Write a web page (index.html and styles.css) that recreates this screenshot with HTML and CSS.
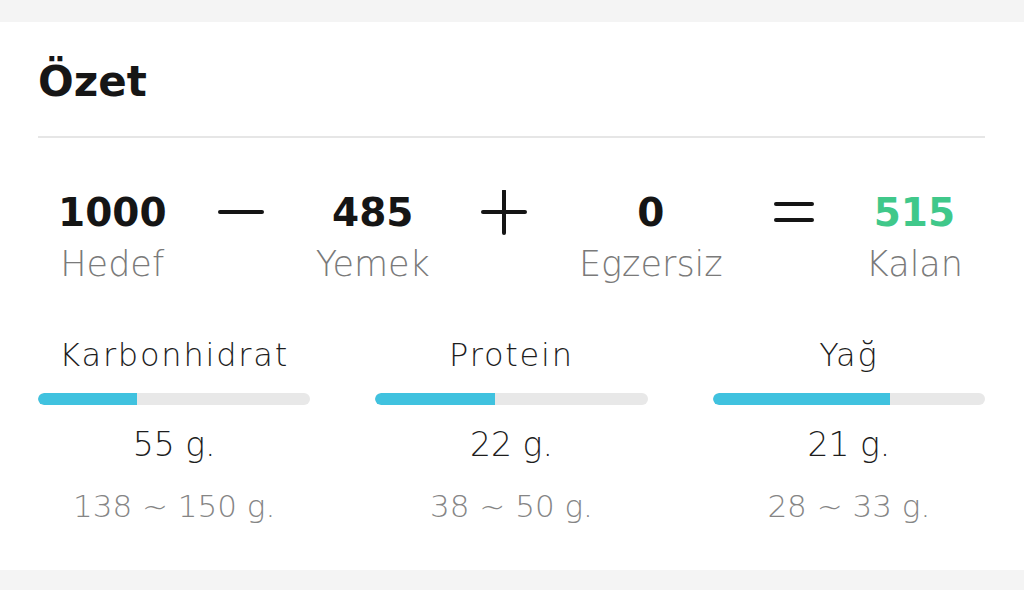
FILE: index.html
```html
<!DOCTYPE html>
<html lang="tr">
<head>
<meta charset="utf-8">
<link rel="stylesheet" href="styles.css">
</head>
<body>
<div class="page">
  <section class="card">
    <h1 class="title">Özet</h1>
    <div class="divider"></div>
    <div class="equation">
      <div class="term">
        <div class="num">1000</div>
        <div class="lbl">Hedef</div>
      </div>
      <div class="op">
        <svg width="46" height="46" viewBox="0 0 46 46"><line x1="2" y1="22" x2="44" y2="22" stroke="#151515" stroke-width="4" stroke-linecap="round"/></svg>
      </div>
      <div class="term">
        <div class="num">485</div>
        <div class="lbl">Yemek</div>
      </div>
      <div class="op">
        <svg width="46" height="46" viewBox="0 0 46 46"><line x1="2" y1="22" x2="44" y2="22" stroke="#151515" stroke-width="4" stroke-linecap="round"/><line x1="23" y1="1" x2="23" y2="43" stroke="#151515" stroke-width="4" stroke-linecap="round"/></svg>
      </div>
      <div class="term">
        <div class="num">0</div>
        <div class="lbl">Egzersiz</div>
      </div>
      <div class="op">
        <svg width="40" height="46" viewBox="0 0 40 46"><line x1="2" y1="14" x2="38" y2="14" stroke="#151515" stroke-width="4" stroke-linecap="round"/><line x1="2" y1="30" x2="38" y2="30" stroke="#151515" stroke-width="4" stroke-linecap="round"/></svg>
      </div>
      <div class="term">
        <div class="num green">515</div>
        <div class="lbl">Kalan</div>
      </div>
    </div>
    <div class="macros">
      <div class="macro">
        <div class="m-name">Karbonhidrat</div>
        <div class="bar"><div class="fill" style="width:36.5%"></div></div>
        <div class="m-val">55 g.</div>
        <div class="m-range">138 ~ 150 g.</div>
      </div>
      <div class="macro">
        <div class="m-name">Protein</div>
        <div class="bar"><div class="fill" style="width:44%"></div></div>
        <div class="m-val">22 g.</div>
        <div class="m-range">38 ~ 50 g.</div>
      </div>
      <div class="macro">
        <div class="m-name">Yağ</div>
        <div class="bar"><div class="fill" style="width:65%"></div></div>
        <div class="m-val">21 g.</div>
        <div class="m-range">28 ~ 33 g.</div>
      </div>
    </div>
  </section>
</div>
</body>
</html>
```

FILE: styles.css
```css
html, body {
  margin: 0;
  padding: 0;
}
body {
  background: #f4f4f4;
  font-family: "DejaVu Sans", sans-serif;
  width: 1024px;
  height: 590px;
  overflow: hidden;
}
.page {
  padding-top: 22px;
}
.card {
  background: #fff;
  height: 548px;
  box-sizing: border-box;
  padding: 0 39px 0 38px;
}
.title {
  margin: 0;
  padding-top: 36px;
  font-size: 42px;
  line-height: 48px;
  font-weight: 700;
  color: #161616;
}
.divider {
  margin-top: 30px;
  height: 2px;
  background: #e6e6e6;
}
.equation {
  display: flex;
  justify-content: space-between;
  align-items: flex-start;
  padding: 0 22px 0 20px;
  margin-top: 51px;
}
.term {
  display: flex;
  flex-direction: column;
  align-items: center;
}
.num {
  font-size: 39px;
  line-height: 48px;
  font-weight: 700;
  color: #151515;
}
.num.green {
  color: #40c88a;
}
.lbl {
  margin-top: 5px;
  font-size: 35px;
  line-height: 44px;
  font-weight: 200;
  color: #7a7a7a;
}
.op {
  height: 48px;
  display: flex;
  align-items: center;
}
.macros {
  display: grid;
  grid-template-columns: repeat(3, 1fr);
  column-gap: 65px;
  margin-top: 50px;
}
.macro {
  display: flex;
  flex-direction: column;
  align-items: center;
}
.m-name {
  font-size: 32px;
  line-height: 38px;
  letter-spacing: 1.8px;
  font-weight: 200;
  color: #1d1d1d;
}
.bar {
  align-self: stretch;
  margin-top: 19px;
  height: 12px;
  border-radius: 6px;
  background: #e8e8e8;
  overflow: hidden;
}
.fill {
  height: 100%;
  background: #40c2df;
  border-radius: 6px 0 0 6px;
}
.m-val {
  margin-top: 20px;
  font-size: 33px;
  line-height: 40px;
  font-weight: 200;
  color: #1d1d1d;
}
.m-range {
  margin-top: 21px;
  font-size: 31px;
  line-height: 40px;
  font-weight: 200;
  color: #858585;
}
```
